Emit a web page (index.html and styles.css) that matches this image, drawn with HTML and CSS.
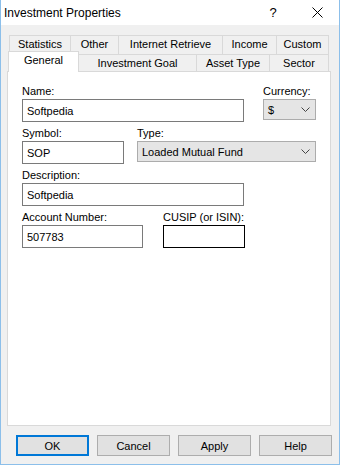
FILE: index.html
```html
<!DOCTYPE html>
<html lang="en">
<head>
  <meta charset="UTF-8">
  <title>Investment Properties</title>
  <link rel="stylesheet" href="styles.css">
</head>
<body>
  <div class="window">
    <div class="titlebar">
      <span class="title">Investment Properties</span>
      <span class="help">?</span>
      <span class="close">
        <svg width="11" height="11" viewBox="0 0 11 11"><path d="M0.5 0.5 L10.5 10.5 M10.5 0.5 L0.5 10.5" stroke="#000" stroke-width="1" fill="none"/></svg>
      </span>
    </div>

    <div class="body">
      <div class="tabs">
        <div class="tab-row back">
          <div class="tab" style="width:62px">Statistics</div>
          <div class="tab" style="width:49px">Other</div>
          <div class="tab" style="width:105px">Internet Retrieve</div>
          <div class="tab" style="width:55px">Income</div>
          <div class="tab" style="width:53px">Custom</div>
        </div>
        <div class="tab-row front">
          <div class="tab selected" style="width:71px">General</div>
          <div class="tab" style="width:119px">Investment Goal</div>
          <div class="tab" style="width:74px">Asset Type</div>
          <div class="tab" style="width:60px">Sector</div>
        </div>
      </div>

      <div class="panel">
        <div class="row">
          <div class="field w-name">
            <label>Name:</label>
            <input type="text" value="Softpedia">
          </div>
          <div class="field w-currency">
            <label>Currency:</label>
            <div class="select">
              <span>$</span>
              <svg width="9" height="5" viewBox="0 0 9 5"><path d="M0.5 0.5 L4.5 4.5 L8.5 0.5" stroke="#444" fill="none"/></svg>
            </div>
          </div>
        </div>
        <div class="row">
          <div class="field w-symbol">
            <label>Symbol:</label>
            <input type="text" value="SOP">
          </div>
          <div class="field w-type">
            <label>Type:</label>
            <div class="select">
              <span>Loaded Mutual Fund</span>
              <svg width="9" height="5" viewBox="0 0 9 5"><path d="M0.5 0.5 L4.5 4.5 L8.5 0.5" stroke="#444" fill="none"/></svg>
            </div>
          </div>
        </div>
        <div class="row">
          <div class="field w-name">
            <label>Description:</label>
            <input type="text" value="Softpedia">
          </div>
        </div>
        <div class="row">
          <div class="field w-account">
            <label>Account Number:</label>
            <input type="text" value="507783">
          </div>
          <div class="field w-cusip">
            <label>CUSIP (or ISIN):</label>
            <input type="text" class="focused" value="">
          </div>
        </div>
      </div>

      <div class="buttons">
        <button class="default">OK</button>
        <button>Cancel</button>
        <button>Apply</button>
        <button>Help</button>
      </div>
    </div>
  </div>
</body>
</html>
```

FILE: styles.css
```css
body {
  margin: 0;
  padding: 0;
  font-family: "Segoe UI", "Liberation Sans", Arial, sans-serif;
  font-size: 11px;
  color: #000;
  background: #fff;
}
.window {
  width: 340px;
  height: 465px;
  box-sizing: border-box;
  border: 1px solid #8cbfea;
  border-top: none;
  display: flex;
  flex-direction: column;
}
.titlebar {
  height: 25px;
  background: #fff;
  display: flex;
  align-items: center;
}
.titlebar .title {
  flex: 1;
  padding-left: 3px;
  font-size: 12px;
}
.titlebar .help {
  width: 46px;
  text-align: center;
  font-size: 13px;
}
.titlebar .close {
  width: 43px;
  display: flex;
  justify-content: center;
}
.body {
  flex: 1;
  background: #f0f0f0;
}
.tabs {
  margin-top: 10px;
}
.tab-row {
  display: flex;
}
.tab-row.back {
  margin-left: 8px;
  height: 19px;
}
.tab-row.front {
  margin-left: 7px;
  margin-top: -3px;
  height: 21px;
  align-items: flex-start;
}
.tab {
  box-sizing: border-box;
  height: 19px;
  border: 1px solid #d9d9d9;
  border-bottom: none;
  background: #f0f0f0;
  text-align: center;
  line-height: 15px;
  padding-top: 1px;
  white-space: nowrap;
}
.tab + .tab {
  margin-left: -1px;
}
.front .tab {
  height: 17px;
  margin-top: 3px;
}
.front .tab.selected {
  height: 21px;
  margin-top: 0;
  background: #fff;
  position: relative;
  z-index: 1;
}
.panel {
  margin-left: 6px;
  margin-top: -1px;
  width: 324px;
  height: 355px;
  box-sizing: border-box;
  background: #fff;
  border: 1px solid #d9d9d9;
  padding: 12px 0 0 14px;
}
.row {
  display: flex;
  align-items: flex-start;
  margin-bottom: 4px;
}
.field label {
  display: block;
  line-height: 15px;
  height: 15px;
  white-space: nowrap;
}
.field input {
  display: block;
  box-sizing: border-box;
  width: 100%;
  height: 23px;
  margin: 0;
  border: 1px solid #7a7a7a;
  padding: 0 4px;
  font-family: inherit;
  font-size: 11px;
  color: #000;
  outline: none;
}
.field input.focused {
  border-color: #000;
}
.select {
  box-sizing: border-box;
  height: 21px;
  background: #e5e5e5;
  border: 1px solid #acacac;
  display: flex;
  align-items: center;
  justify-content: space-between;
  padding: 0 5px 0 4px;
}
.w-name { width: 222px; }
.w-currency { width: 53px; margin-left: 19px; }
.w-symbol { width: 102px; }
.w-type { width: 179px; margin-left: 13px; }
.w-account { width: 121px; }
.w-cusip { width: 82px; margin-left: 20px; }
.buttons {
  display: flex;
  gap: 8px;
  margin: 9px 0 0 15px;
}
.buttons button {
  box-sizing: border-box;
  width: 73px;
  height: 21px;
  margin: 0;
  padding: 0;
  background: #e1e1e1;
  border: 1px solid #adadad;
  font-family: inherit;
  font-size: 11px;
  color: #000;
}
.buttons button.default {
  border: 2px solid #0078d7;
}
```
